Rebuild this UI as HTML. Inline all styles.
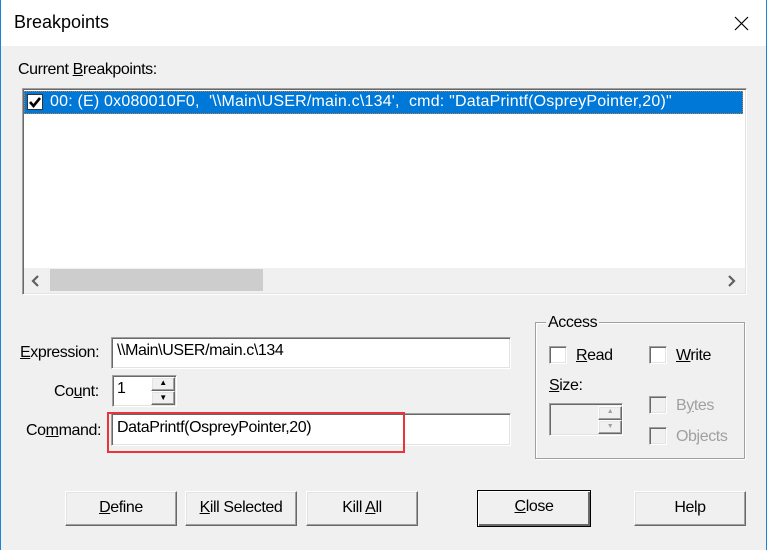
<!DOCTYPE html>
<html><head><meta charset="utf-8"><style>
*{box-sizing:border-box;margin:0;padding:0}
body{width:767px;height:550px;background:#f0f0f0;font-family:"Liberation Sans",Arial,sans-serif;font-size:16px;color:#000;position:relative;overflow:hidden;letter-spacing:-0.4px}
.a{position:absolute;white-space:nowrap}
.sunk{position:absolute;background:#fff;border:1px solid #a0a0a0;border-right-color:#fff;border-bottom-color:#fff;box-shadow:inset 1px 1px 0 #696969,inset -1px -1px 0 #e3e3e3}
.btn{position:absolute;height:35px;background:#f0f0f0;border:1px solid #fff;border-right-color:#696969;border-bottom-color:#696969;box-shadow:inset -1px -1px 0 #a0a0a0,inset 1px 1px 0 #e3e3e3;text-align:center;line-height:32px}
.cb{position:absolute;width:18px;height:18px;background:#fff;border:1px solid #a0a0a0;border-right-color:#fff;border-bottom-color:#fff;box-shadow:inset 1px 1px 0 #696969,inset -1px -1px 0 #e3e3e3}
.cb.d{background:#f0f0f0}
u{text-decoration:underline}
.dis{color:#a0a0a0}
</style></head><body>
<div class="a" style="left:0;top:0;width:767px;height:46px;background:#fff"></div>
<div class="a" style="left:0;top:0;width:1px;height:550px;background:#1883d7"></div>
<div class="a" style="left:766px;top:0;width:1px;height:550px;background:#1883d7"></div>
<div class="a" style="left:14px;top:12px;font-size:18px;letter-spacing:0">Breakpoints</div>
<svg class="a" style="left:734px;top:16px" width="15" height="15"><path d="M1 1L14 14M14 1L1 14" stroke="#000" stroke-width="1.2"/></svg>

<div class="a" style="left:18px;top:61px">Current <u>B</u>reakpoints:</div>
<div class="sunk" style="left:22px;top:88px;width:725px;height:207px"></div>
<div class="a" style="left:24px;top:91px;width:719px;height:23px;background:#0078d7;border:1px dotted #c08040"></div>
<div class="a" style="left:27px;top:94px;width:16px;height:16px;background:#fff;border:1px solid #333"></div>
<svg class="a" style="left:28px;top:95px" width="14" height="14"><path d="M2 7L5.5 11L12 3" stroke="#000" stroke-width="2.6" fill="none"/></svg>
<div class="a" style="left:50px;top:93px;color:#fff;letter-spacing:0.2px">00: (E) 0x080010F0,&nbsp; '\\Main\USER/main.c\134',&nbsp; cmd: "DataPrintf(OspreyPointer,20)"</div>
<div class="a" style="left:24px;top:268px;width:721px;height:25px;background:#f0f0f0"></div>
<div class="a" style="left:50px;top:269px;width:213px;height:22px;background:#cdcdcd"></div>
<svg class="a" style="left:31px;top:275px" width="10" height="12"><path d="M7 1L2 6L7 11" stroke="#606060" stroke-width="2.2" fill="none"/></svg>
<svg class="a" style="left:726px;top:275px" width="10" height="12"><path d="M3 1L8 6L3 11" stroke="#606060" stroke-width="2.2" fill="none"/></svg>

<div class="a" style="left:20px;top:344px"><u>E</u>xpression:</div>
<div class="sunk" style="left:111px;top:337px;width:400px;height:32px"></div>
<div class="a" style="left:117px;top:342px">\\Main\USER/main.c\134</div>
<div class="a" style="left:54px;top:383px">Co<u>u</u>nt:</div>
<div class="sunk" style="left:112px;top:375px;width:65px;height:32px"></div>
<div class="a" style="left:117px;top:380px">1</div>
<div class="btn" style="left:151px;top:377px;width:24px;height:14px;line-height:10px;font-size:8px">▲</div>
<div class="btn" style="left:151px;top:391px;width:24px;height:14px;line-height:12px;font-size:8px">▼</div>
<div class="a" style="left:26px;top:422px">Co<u>m</u>mand:</div>
<div class="sunk" style="left:111px;top:413px;width:400px;height:33px"></div>
<div class="a" style="left:117px;top:419px">DataPrintf(OspreyPointer,20)</div>
<div class="a" style="left:107px;top:412px;width:298px;height:41px;border:2px solid #e8353a"></div>

<div class="a" style="left:535px;top:322px;width:210px;height:137px;border:1px solid #a0a0a0;box-shadow:1px 1px 0 #fff,inset 1px 1px 0 #fff"></div>
<div class="a" style="left:546px;top:314px;background:#f0f0f0;padding:0 2px">Access</div>
<div class="cb" style="left:549px;top:346px"></div>
<div class="a" style="left:576px;top:347px"><u>R</u>ead</div>
<div class="cb" style="left:649px;top:346px"></div>
<div class="a" style="left:676px;top:347px"><u>W</u>rite</div>
<div class="a" style="left:549px;top:377px"><u>S</u>ize:</div>
<div class="sunk" style="left:549px;top:403px;width:74px;height:33px;background:#f0f0f0"></div>
<div class="btn" style="left:598px;top:406px;width:24px;height:14px;line-height:10px;font-size:7px;color:#a0a0a0">▲</div>
<div class="btn" style="left:598px;top:420px;width:24px;height:14px;line-height:12px;font-size:7px;color:#a0a0a0">▼</div>
<div class="cb d" style="left:649px;top:396px"></div>
<div class="a dis" style="left:676px;top:397px">B<u>y</u>tes</div>
<div class="cb d" style="left:649px;top:427px"></div>
<div class="a dis" style="left:676px;top:428px">Objects</div>

<div class="btn" style="left:65px;top:491px;width:112px"><u>D</u>efine</div>
<div class="btn" style="left:185px;top:491px;width:112px"><u>K</u>ill Selected</div>
<div class="btn" style="left:306px;top:491px;width:112px">Kill <u>A</u>ll</div>
<div class="btn" style="left:477px;top:490px;width:114px;height:37px;border:1px solid #000;box-shadow:inset 1px 1px 0 #fff,inset -2px -2px 0 #696969"><u>C</u>lose</div>
<div class="btn" style="left:634px;top:491px;width:112px">Help</div>
</body></html>
